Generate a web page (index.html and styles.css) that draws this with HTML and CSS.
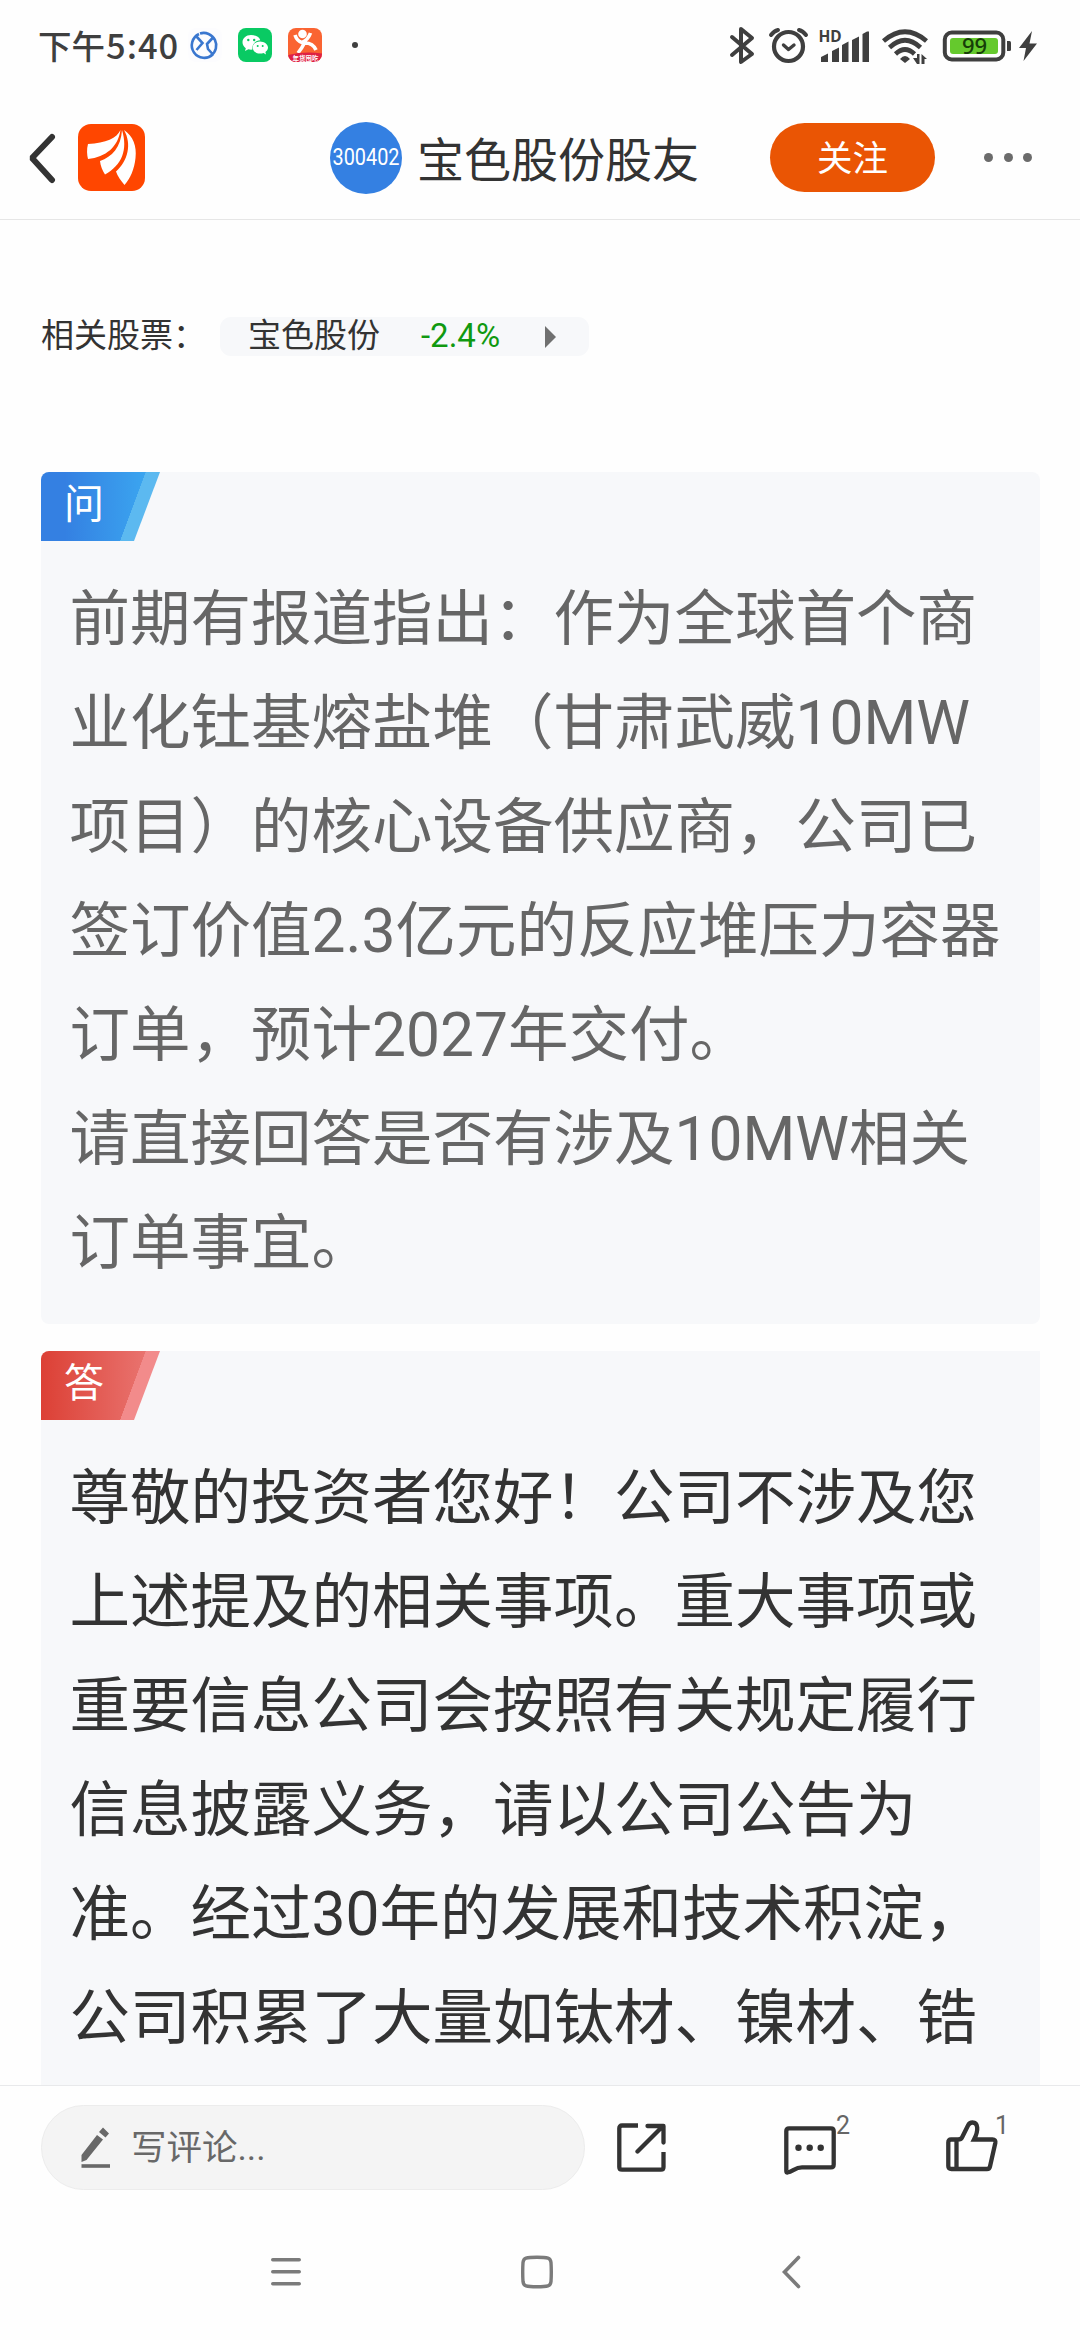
FILE: index.html
```html
<!DOCTYPE html>
<html lang="zh-CN">
<head>
<meta charset="utf-8">
<title>宝色股份股友</title>
<link rel="stylesheet" href="styles.css">
</head>
<body>
<div class="status">
  <span class="time">下午<span class="clock">5:40</span></span>
  <svg class="notify" width="34" height="34" viewBox="0 0 34 34"><rect width="34" height="34" rx="8" fill="#fcfcfe"/><g fill="none" stroke="#3a77cf" stroke-width="2.600"><path d="M11 6A12.500 12.500 0 1 0 25 26.300M23 27.600A12.500 12.500 0 0 0 12 5.500M8.500 8.500L14.500 15L8.500 22M25.500 9L19 16L20 21L25 26.500"/></g></svg>
  <svg class="notify" width="34" height="34" viewBox="0 0 34 34"><rect width="34" height="34" rx="8" fill="#09ca63"/><path d="M13 7C8 7 4.500 10.300 4.500 14.300C4.500 16.800 5.800 18.800 7.800 20.200L7 23L10.400 21.300Q12.500 22 14.500 21.600C13.500 16 18 12.300 22.300 12.300C21.500 9 17.600 7 13 7Z" fill="#fff"/><path d="M22 13.400C17.800 13.400 14.700 16.200 14.700 19.500S17.800 25.600 22 25.600Q24 25.600 25.500 25L28 26.400L27.400 24C29 22.800 30 21.300 30 19.500C30 16.200 26.200 13.400 22 13.400Z" fill="#fff"/><g fill="#09ca63"><circle cx="10.300" cy="12" r="1.200"/><circle cx="16.200" cy="12" r="1.200"/><circle cx="19.700" cy="18" r="1"/><circle cx="24.700" cy="18" r="1"/></g></svg>
  <svg class="notify" width="34" height="34" viewBox="0 0 34 34"><defs><clipPath id="round"><rect width="34" height="34" rx="8"/></clipPath></defs><g clip-path="url(#round)"><rect width="34" height="34" fill="#fa6432"/><circle cx="14.500" cy="6" r="4.300" fill="#fff"/><path d="M7 7Q9 13 14 14.500Q20 12 22.500 5M17 14Q14 20 10 25M17 15Q25 15 28 22" fill="none" stroke="#fff" stroke-width="3.600"/><path d="M0 27Q17 23 34 25.500V34H0Z" fill="#de2144"/><text x="17.500" y="32.500" text-anchor="middle" class="promo">年货囤吃</text></g></svg>
  <i class="dot"></i>
  <svg class="sys" width="314" height="44" viewBox="728 22 314 44">
    <g fill="none" stroke="#3f3f3f" stroke-width="4" stroke-linejoin="round" stroke-linecap="round">
      <path d="M732 36L752 53L741 61V28L752 37L732 54"/>
      <circle cx="788.500" cy="45.500" r="14.500" stroke-width="4.200"/><path d="M783.500 44L788.500 48.500L794 44" stroke-width="3.400"/><path d="M771 34Q774 30 778 29M806 34Q803 30 799 29"/>
    </g>
    <text x="818.500" y="41" class="hd">HD</text>
    <g fill="#3f3f3f"><path d="M821 61V56L828 52.500V61ZM832 61V50L839 46.500V61ZM842 61V44L848.500 40.500V61ZM852 61V39L859 35.500V61ZM862.500 61V33L867 30.500H869V61Z"/></g>
    <g fill="none" stroke="#3f3f3f" stroke-width="4.600"><path d="M883.500 40Q905 21.500 926.500 40M889.500 46.500Q905 32 920.500 46.500M895.500 53Q905 44 914.500 53"/></g>
    <path d="M900 58Q905 52 910 58L905 62ZM913 57H917V53H919.500V63H917ZM921.500 53L927 58H924.500V63H921.500Z" fill="#3f3f3f"/>
    <rect x="944.800" y="31.500" width="58.500" height="27" rx="7" fill="none" stroke="#3f3f3f" stroke-width="4"/>
    <rect x="950" y="37" width="48" height="16" rx="3" fill="#65c92d"/><path d="M1007 40h2.500q1.500 0 1.500 1.500v7q0 1.500-1.500 1.500h-2.500z" fill="#3f3f3f"/>
    <text x="974.500" y="53.200" text-anchor="middle" class="battery">99</text>
    <path d="M1032 30L1019 47H1026L1023.500 60L1037 42.500H1029.500Z" fill="#3f3f3f"/>
  </svg>
</div>
<header class="header">
  <svg class="back" width="30" height="52" viewBox="0 0 30 52"><path d="M25 5L5 26L25 48" fill="none" stroke="#333" stroke-width="6" stroke-linecap="round" stroke-linejoin="bevel"/></svg>
  <svg class="logo" width="67" height="67" viewBox="0 0 67 67"><rect width="67" height="67" rx="13" fill="#ff4600"/><g fill="#fff"><path d="M42.500 6C39 14 28 19 10 20C8.500 25 9 31 10 35C28 33 40 23 42.500 6Z"/><path d="M44 6C43 23 34 33 22 37C22.500 42 24.500 47 27 50.500C44 41 50 26 44 6Z"/><path d="M46 6C55 12 59 22 57.500 34C56.500 45 52 55 46.500 61C43 57 39.500 52 38 47.500C50 37 54 20 46 6Z"/></g></svg>
  <svg class="avatar" width="72" height="72" viewBox="0 0 72 72"><circle cx="36" cy="36" r="36" fill="#3480e2"/><text x="2.500" y="43" textLength="67" lengthAdjust="spacingAndGlyphs" class="code">300402</text></svg>
  <h1 class="title">宝色股份股友</h1>
  <span class="follow">关注</span>
  <span class="more"><i></i><i></i><i></i></span>
</header>
<main class="main">
  <div class="related">
    <span class="label">相关股票：</span>
    <span class="stock"><span class="name">宝色股份</span><span class="change">-2.4%</span><svg width="11" height="22" viewBox="0 0 11 22"><path d="M0 0L11 11L0 22Z" fill="#707070"/></svg></span>
  </div>
  <section class="card question">
    <div class="tag">问</div>
    <p class="text">前期有报道指出：作为全球首个商业化钍基熔盐堆（甘肃武威10MW<br>项目）的核心设备供应商，公司已签订价值2.3亿元的反应堆压力容器订单，预计2027年交付。<br>请直接回答是否有涉及10MW相关订单事宜。</p>
  </section>
  <section class="card answer">
    <div class="tag">答</div>
    <p class="text">尊敬的投资者您好！公司不涉及您上述提及的相关事项。重大事项或重要信息公司会按照有关规定履行信息披露义务，请以公司公告为<br>准。经过30年的发展和技术积淀，公司积累了大量如钛材、镍材、锆</p>
  </section>
</main>
<footer class="actions">
  <div class="input"><svg width="30" height="42" viewBox="0 0 30 42"><path d="M0.500 28L16 8L22 12.500L5.500 33L0.500 35ZM18 5L22 0.500L28 6.500L24.500 10.500Z" fill="#686868"/><path d="M0.500 39H29" stroke="#686868" stroke-width="3.600"/></svg><span>写评论...</span></div>
  <svg class="share" width="50" height="50" viewBox="0 0 50 50"><g fill="none" stroke="#333" stroke-width="4.300"><path d="M21 2.500H5Q2.300 2.500 2.300 5.200V44Q2.300 46.700 5 46.700H44Q46.500 46.700 46.500 44V29"/><path d="M30.500 3H46.500V19.500M46 3L20.500 28.500" stroke-linecap="round" stroke-linejoin="round"/></g></svg>
  <svg class="comment" width="52" height="50" viewBox="0 0 52 50"><path d="M5 2.300H47Q49.700 2.300 49.700 5V38.500Q49.700 41.300 47 41.300H18C11 41.300 9 45.500 3.500 46.500Q2.300 46.500 2.300 45V5Q2.300 2.300 5 2.300Z" fill="none" stroke="#333" stroke-width="4.300"/><g fill="#333"><circle cx="14.500" cy="21.700" r="3.200"/><circle cx="25.700" cy="21.700" r="3.200"/><circle cx="36.700" cy="21.700" r="3.200"/></g></svg>
  <span class="count">2</span>
  <svg class="like" width="52" height="52" viewBox="0 0 52 52"><path d="M10.500 19.500H5Q2.300 19.500 2.300 22.500V46Q2.300 49 5.500 49H41Q43.500 49 44 46.500L49.300 23Q50 19.500 46.500 19.500H28C33 10 32 2.500 26.500 2.500Q23.500 2.500 22 5.500L16 17.500Q15 19.500 12 19.500H10.500V49" fill="none" stroke="#333" stroke-width="4.300"/></svg>
  <span class="count one">1</span>
</footer>
<nav class="nav">
  <svg width="30" height="34" viewBox="0 0 30 34"><path d="M1.800 4.700H28.200M1.800 16.700H28.200M1.800 28.700H28.200" stroke="#7b7b7b" stroke-width="3.600" stroke-linecap="round"/></svg>
  <svg width="34" height="34" viewBox="0 0 34 34"><path d="M17 2.300Q25 2.300 28 3.200Q30.600 4 31 7.500Q31.600 17 31 26.500Q30.600 30 28 30.800Q25 31.700 17 31.700Q9 31.700 6 30.800Q3.400 30 3 26.500Q2.400 17 3 7.500Q3.400 4 6 3.200Q9 2.300 17 2.300Z" fill="none" stroke="#7b7b7b" stroke-width="3.400"/></svg>
  <svg width="20" height="34" viewBox="0 0 20 34"><path d="M17.500 2.500L3.500 17L17.500 31.500" fill="none" stroke="#7b7b7b" stroke-width="3.600" stroke-linecap="round"/></svg>
</nav>
</body>
</html>
```
FILE: styles.css
```css
* { box-sizing: border-box; }
body {
  margin: 0;
  width: 1080px;
  height: 2340px;
  overflow: hidden;
  display: flex;
  flex-direction: column;
  background: #fefefe;
  color: #333;
  font-family: Roboto, "Noto Sans CJK SC", sans-serif;
  text-spacing-trim: space-all;
}
svg { display: block; flex: none; }

.status { height: 90px; padding-left: 38px; display: flex; align-items: center; flex: none; }
.time { width: 150px; font: 500 33.5px/86px "Noto Sans CJK SC", sans-serif; color: #3f3f3f; white-space: nowrap; padding-bottom: 2px; }
.clock { font-size: 34.5px; letter-spacing: 1px; margin-left: 1px; }
.notify { margin-right: 16px; }
.dot { width: 6px; height: 6px; border-radius: 50%; background: #3f3f3f; margin-left: 14px; }
.sys { margin-left: 370px; }
.promo { font: 700 6.500px "Noto Sans CJK SC", sans-serif; fill: #fff; }
.hd { font: 700 15.500px "Noto Sans", sans-serif; fill: #3f3f3f; }
.battery { font: 500 22px "Noto Sans", sans-serif; fill: #163d08; }

.header { height: 130px; flex: none; display: flex; align-items: center; padding: 6px 48px 0 27px; border-bottom: 1px solid #e6e6e6; }
.logo { margin-left: 21px; }
.avatar { margin-left: 185px; overflow: visible; }
.code { font: 23px Roboto, sans-serif; fill: #fff; }
.title { margin: 0 0 0 15px; padding-top: 6px; font-size: 47px; line-height: 70px; font-weight: 400; width: 353px; white-space: nowrap; }
.follow { width: 165px; height: 69px; border-radius: 35px; background: #ea5504; color: #fff; font-size: 35.500px; line-height: 72px; text-align: center; }
.more { margin-left: auto; display: flex; gap: 10.500px; }
.more i { width: 9px; height: 9px; border-radius: 50%; background: #6b6b6b; }

.main { flex: 1; min-height: 0; display: flex; flex-direction: column; padding: 97px 40px 0 41px; overflow: hidden; }
.related { display: flex; align-items: center; height: 39px; font-size: 33px; line-height: 39px; flex: none; margin-bottom: 116px; white-space: nowrap; }
.label { width: 179px; padding-bottom: 2px; }
.stock { width: 369px; height: 39px; border-radius: 11px; background: #f7f8fa; padding-left: 28px; display: flex; align-items: center; }
.name { padding-bottom: 2px; }
.change { color: #109910; width: 124px; margin-left: 41px; padding-bottom: 2px; }

.card { background: #f7f8fa; flex: none; }
.question { height: 852px; border-radius: 8px; color: #666; }
.answer { margin-top: 27px; flex: 1; border-radius: 8px 0 0 0; }
.tag { width: 119px; height: 69px; padding-left: 23px; color: #fff; font-size: 40px; line-height: 66px; border-radius: 8px 0 0 0; clip-path: polygon(0 0, 100% 0, 93px 100%, 0 100%); }
.question .tag { background: linear-gradient(110.4deg, transparent 72.3%, #5cb9f0 72.5%), linear-gradient(90deg, #3480e2 20%, #3ba6f0 90%); }
.answer .tag { background: linear-gradient(110.4deg, transparent 72.3%, #f28b8b 72.5%), linear-gradient(90deg, #dc4035, #e97470 90%); }
.text { margin: 27px 30px 0 28.500px; font-size: 60.500px; line-height: 104px; }

.actions { height: 119px; flex: none; border-top: 1px solid #e8e9eb; display: flex; align-items: flex-start; padding: 19px 0 0 41px; }
.input { width: 544px; height: 85px; border: 1px solid #ececec; border-radius: 43px; background: #f4f4f4; display: flex; align-items: center; padding-left: 39px; color: #686868; font-size: 35.500px; }
.input span { margin-left: 20px; line-height: 82px; }
.share { margin: 18px 0 0 32px; }
.comment { margin: 21px 0 0 117px; }
.like { margin: 15px 0 0 96px; }
.count { width: 14px; font-size: 25px; line-height: 30px; color: #666; margin-top: 6px; }
.one { margin-left: -3px; }

.nav { height: 136px; flex: none; display: grid; grid-template-columns: 30px 34px 20px; column-gap: 219px; padding: 51px 0 0 271px; }
.nav svg:last-child { margin-left: 8px; }
```
